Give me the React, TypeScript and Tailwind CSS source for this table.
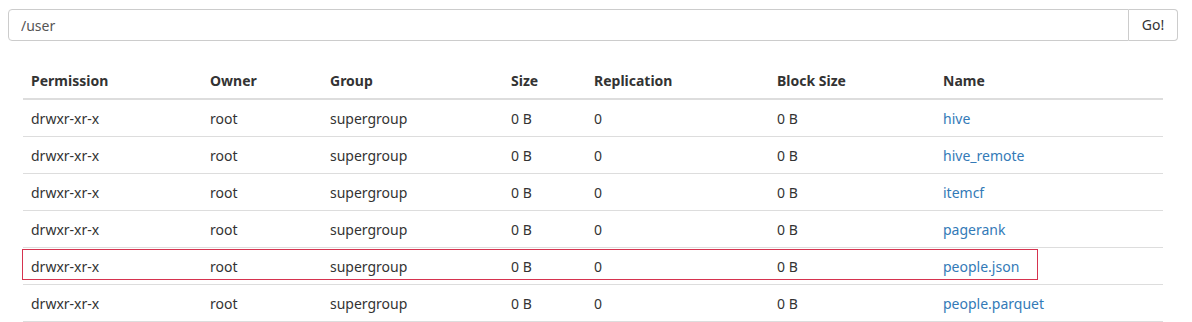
import React from "react";

type Entry = {
  permission: string;
  owner: string;
  group: string;
  size: string;
  replication: string;
  blockSize: string;
  name: string;
};

const entries: Entry[] = [
  { permission: "drwxr-xr-x", owner: "root", group: "supergroup", size: "0 B", replication: "0", blockSize: "0 B", name: "hive" },
  { permission: "drwxr-xr-x", owner: "root", group: "supergroup", size: "0 B", replication: "0", blockSize: "0 B", name: "hive_remote" },
  { permission: "drwxr-xr-x", owner: "root", group: "supergroup", size: "0 B", replication: "0", blockSize: "0 B", name: "itemcf" },
  { permission: "drwxr-xr-x", owner: "root", group: "supergroup", size: "0 B", replication: "0", blockSize: "0 B", name: "pagerank" },
  { permission: "drwxr-xr-x", owner: "root", group: "supergroup", size: "0 B", replication: "0", blockSize: "0 B", name: "people.json" },
  { permission: "drwxr-xr-x", owner: "root", group: "supergroup", size: "0 B", replication: "0", blockSize: "0 B", name: "people.parquet" },
];

const columns = [
  { label: "Permission", width: "w-[179px]" },
  { label: "Owner", width: "w-[120px]" },
  { label: "Group", width: "w-[181px]" },
  { label: "Size", width: "w-[83px]" },
  { label: "Replication", width: "w-[183px]" },
  { label: "Block Size", width: "w-[166px]" },
  { label: "Name", width: "w-[228px]" },
];

export default function App() {
  return (
    <div className="bg-white pt-[9px] pl-[8px] pr-[14px] text-[14px] leading-[20px] text-[#333] font-['Noto_Sans',sans-serif]">
      <div className="flex h-[32px]">
        <input
          defaultValue="/user"
          className="flex-1 h-full rounded-l-[4px] border border-[#ccc] px-[12px] text-[14px] text-[#555] outline-none"
        />
        <button className="h-full w-[49px] rounded-r-[4px] border border-l-0 border-[#ccc] bg-white text-[14px] text-[#333]">
          Go!
        </button>
      </div>

      <div className="relative mx-[15px] mt-[21px]">
        <table className="w-full table-fixed border-collapse">
          <thead>
            <tr className="border-b-2 border-[#ddd]">
              {columns.map((c) => (
                <th key={c.label} className={`${c.width} px-[8px] pt-[9px] pb-[7px] text-left font-bold`}>
                  {c.label}
                </th>
              ))}
            </tr>
          </thead>
          <tbody>
            {entries.map((e) => (
              <tr key={e.name} className="border-b border-[#ddd]">
                <td className="px-[8px] pt-[9px] pb-[7px]">{e.permission}</td>
                <td className="px-[8px] pt-[9px] pb-[7px]">{e.owner}</td>
                <td className="px-[8px] pt-[9px] pb-[7px]">{e.group}</td>
                <td className="px-[8px] pt-[9px] pb-[7px]">{e.size}</td>
                <td className="px-[8px] pt-[9px] pb-[7px]">{e.replication}</td>
                <td className="px-[8px] pt-[9px] pb-[7px]">{e.blockSize}</td>
                <td className="px-[8px] pt-[9px] pb-[7px]">
                  <a href="#" className="text-[#337ab7]">
                    {e.name}
                  </a>
                </td>
              </tr>
            ))}
          </tbody>
        </table>
        {/* highlight box drawn over the people.json row */}
        <div className="pointer-events-none absolute left-[-1px] top-[187px] h-[31px] w-[1016px] border border-[#d6334f]" />
      </div>
    </div>
  );
}
